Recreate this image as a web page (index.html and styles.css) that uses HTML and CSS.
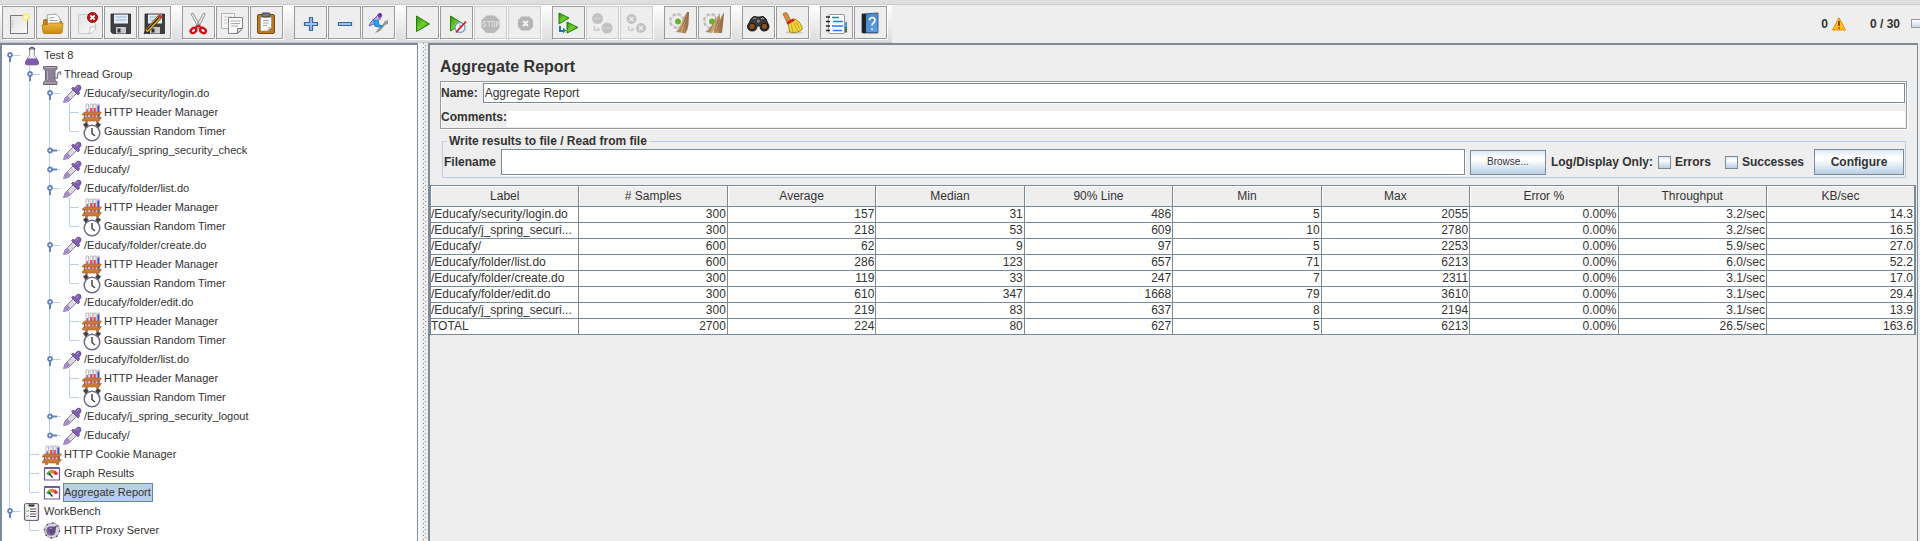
FILE: index.html
```html
<!DOCTYPE html>
<html lang="en">
<head>
<meta charset="utf-8">
<title>Aggregate Report</title>
<link rel="stylesheet" href="styles.css">
</head>
<body>
<svg class="defs" width="0" height="0" aria-hidden="true">
  <defs>
    <linearGradient id="green" x1="0" y1="0" x2="1" y2="1"><stop offset="0" stop-color="#2f8a10"/><stop offset=".5" stop-color="#6fd02c"/><stop offset="1" stop-color="#2a7d0c"/></linearGradient>
    <linearGradient id="gold" x1="0" y1="0" x2="0" y2="1"><stop offset="0" stop-color="#f0b840"/><stop offset="1" stop-color="#c88a10"/></linearGradient>
    <linearGradient id="blue" x1="0" y1="0" x2="1" y2="1"><stop offset="0" stop-color="#3f7fc4"/><stop offset="1" stop-color="#5f9fe4"/></linearGradient>
    <linearGradient id="paper" x1="0" y1="0" x2="1" y2="1"><stop offset="0" stop-color="#e2e2e2"/><stop offset="1" stop-color="#fafafa"/></linearGradient>
    <linearGradient id="straw" x1="0" y1="0" x2="1" y2="0"><stop offset="0" stop-color="#b08a60"/><stop offset=".5" stop-color="#cfa478"/><stop offset="1" stop-color="#8a6238"/></linearGradient>

    <symbol id="open" viewBox="0 0 20 12"><path d="M7.500 5.500h11" stroke="#b8cfe5" fill="none"/><path d="M8 6v6" stroke="#6382bf" stroke-width="2"/><circle cx="8" cy="5" r="2" fill="#fff" stroke="#6382bf" stroke-width="1.800"/></symbol>
    <symbol id="shut" viewBox="0 0 20 12"><path d="M7.500 5.500h11" stroke="#b8cfe5" fill="none"/><path d="M9 5.500h6" stroke="#6382bf" stroke-width="2"/><circle cx="8" cy="5.500" r="2" fill="#fff" stroke="#6382bf" stroke-width="1.800"/></symbol>
    <symbol id="leaf" viewBox="0 0 20 12"><path d="M7.500 5.500h9.500" stroke="#b8cfe5" fill="none"/></symbol>

    <symbol id="flask" viewBox="0 0 20 20"><path d="M7.500 3v6L3.500 16q-1 3 2 3h9q3 0 2-3L12.500 9V3z" fill="#f1eef6" stroke="#999" stroke-width="1"/><path d="M5 12.500h10l2 4q0 2.500-2.500 2.500h-9Q3 19 3 16.500z" fill="#7e5cae"/><path d="M7 3.500q3-4 6 0" fill="none" stroke="#555" stroke-width="1.300"/><path d="M9 5v5" stroke="#fff"/></symbol>
    <symbol id="spool" viewBox="0 0 20 20"><path d="M1.500 1.500h13.500V4l-2 1.500v10l2 1.500v2.500H1.500V17l2-1.500v-10l-2-1.500z" fill="#8c8294" stroke="#6d6378"/><path d="M5.500 6v9" stroke="#b4acbc"/><path d="M2 2.500h12.500M2 18h12.500" stroke="#b4acbc"/><path d="M13 13q3 1 2.500-2.500T18.500 7v3" fill="none" stroke="#8c8294" stroke-width="1.500"/></symbol>
    <symbol id="dropper" viewBox="0 0 20 20"><path d="M1.500 18.500l1.500-4.500 8-8 3.500 3.500-8 8z" fill="#dcd8e2" stroke="#8a829a"/><path d="M1.500 18.500l1.500-4.500 2.500-2.500 3 3.500-3 2.500z" fill="#a58cc8"/><path d="M9.500 4.500l6.500 6.500 1.500-2-.5-1.500 2-3Q19.500 1 16 1l-3.500 3-1.500-.8z" fill="#7e5cae" stroke="#6a4898" stroke-width=".8"/><path d="M14.500 4.500l2-2" stroke="#b8a0dc"/></symbol>
    <symbol id="rack" viewBox="0 0 20 20"><g stroke="#aaa" fill="#f4f4fa" stroke-width=".7"><path d="M4 1h2.500v13H4zM8 1h2.500v13H8zM11.500 1H14v13h-2.500zM15 1h2.500v13H15z"/></g><path d="M4.500 6H6v8H4.500z" fill="#9470b8"/><path d="M8.200 5h2v9h-2zM11.700 5h2v9h-2z" fill="#e0405c"/><path d="M15.400 2.500h1.800V14h-1.800z" fill="#4048d8"/><path d="M.5 11l2-2H19.500l-2 3H.5zM.5 16.500l2-2H19.500L17 18H.5z" fill="#cc7a38" stroke="#a8602a" stroke-width=".6"/><path d="M2.500 11v5M17 11v5M3 19h3M14 19h3" stroke="#a8602a" stroke-width="1.400"/></symbol>
    <symbol id="timer" viewBox="0 0 20 20"><path d="M1.500 3l3.500-1.500M15 1.500L18.500 3M3 5.500l3-3.500M17 5.500L14 2" stroke="#444" stroke-width="2"/><circle cx="10" cy="11" r="7.800" fill="#fff" stroke="#75688a" stroke-width="1.500"/><path d="M10 6v5.500l3 2.500" fill="none" stroke="#444" stroke-width="1.500"/></symbol>
    <symbol id="gauge" viewBox="0 0 20 20"><path d="M2.500 4h15v12h-15z" fill="#fff" stroke="#7058a0" stroke-width="1.200"/><path d="M2.500 4h15" stroke="#5b4b90" stroke-width="1.600"/><path d="M4.500 10.500q0-2 2.500-4l2 3-2 2z" fill="#48b048"/><path d="M7 6.500q3-1.500 6 0l-1.500 3H9z" fill="#ee8030"/><path d="M13 6.500q3 1.500 3 4l-3 .5-1.500-2z" fill="#e03030"/><path d="M10.500 13.500l-3.500-4" stroke="#222" stroke-width="1.200"/></symbol>
    <symbol id="bench" viewBox="0 0 20 20"><rect x="2.500" y="1.500" width="14" height="17" rx="2" fill="#e6e4ea" stroke="#6e6478" stroke-width="1.200"/><path d="M5 4h9v13H5z" fill="#fafafa"/><path d="M6.500 3.500h6" stroke="#333" stroke-width="2.200"/><path d="M8 7h6M8 9.500h6M8 12h6M8 14.500h6" stroke="#555" stroke-width="1.200"/><path d="M4.500 9l1 1 1-2M4.500 14l1 1 1-2" fill="none" stroke="#58b040"/></symbol>
    <symbol id="proxy" viewBox="0 0 20 20"><circle cx="10" cy="9.500" r="7.500" fill="#d8d2e0" stroke="#8a8098" stroke-width=".7"/><circle cx="10" cy="9.500" r="7.500" fill="none" stroke="#333" stroke-width="1.300" stroke-dasharray="1.300 4.600"/><circle cx="9" cy="10" r="4.800" fill="#7a6898"/><path d="M6 9.500q0-4 4-3l5-2-2 5q0 4-4 4z" fill="#5d4a80"/><path d="M7 8.500q1-2 3-1" stroke="#b8a8d0" fill="none"/></symbol>

    <symbol id="new" viewBox="0 0 24 24"><path d="M4.500 4.500h17v18h-17z" fill="url(#paper)" stroke="#777"/><path d="M6 10h1M6 13h1M6 16h1" stroke="#999"/><circle cx="20" cy="6" r="4" fill="#f5ea70" opacity=".8"/><circle cx="20" cy="6" r="2" fill="#fffde0"/></symbol>
    <symbol id="folder" viewBox="0 0 24 24"><path d="M3 10q0-2 2-2h5l1 2h11v9H3z" fill="#b87c10"/><path d="M7 4l9-1 4 4v9H8z" fill="#fff" stroke="#888" stroke-width=".8"/><path d="M9.500 7l5-.5M9.500 9.500h8" stroke="#999"/><path d="M2 14q6 0 8-2h13l-1 9q0 1.500-1.500 1.500H4.500Q3 22.500 3 21z" fill="url(#gold)" stroke="#a87410" stroke-width=".8"/></symbol>
    <symbol id="close" viewBox="0 0 24 24"><path d="M4.500 3.500h17v12l-6 7h-11z" fill="url(#paper)" stroke="#ccc"/><path d="M15 23q2-5 1-7 4 1 6-1 0 5-7 8z" fill="#fff" stroke="#aaa" stroke-width=".7"/><circle cx="18.500" cy="6.500" r="5" fill="#c81010" stroke="#901010"/><path d="M16.300 4.300l4.400 4.400m0-4.400l-4.400 4.400" stroke="#fff" stroke-width="1.900"/></symbol>
    <symbol id="save" viewBox="0 0 24 24"><path d="M3 3h19.500v19.500H5L3 21z" fill="#3f4044" stroke="#222" stroke-width=".8"/><path d="M6 3.500h14v9H6z" fill="#e4ecf4"/><path d="M7.500 6h11M7.500 9h11" stroke="#90b4d8"/><path d="M8 16h10v6.500H8z" fill="#c8c8c8"/><path d="M9.500 17.500h3v4h-3z" fill="#333"/></symbol>
    <symbol id="saveas" viewBox="0 0 24 24"><use href="#save" width="24" height="24"/><path d="M2 23l2-5L16 5l3 2.500L7 20.500z" fill="#f0b820" stroke="#4c3806" stroke-width=".8"/><path d="M5 19L17.500 6" stroke="#222" stroke-width="1.200"/><path d="M15.500 5l2-2q2.500 1 3 3L19 8z" fill="#d04030"/><path d="M2 23l1.300-3.500 2.500 2z" fill="#222"/></symbol>
    <symbol id="cut" viewBox="0 0 24 24"><path d="M5 3l2-1 8 14-2 2zM19.500 3l-2-1-8 14 2 2z" fill="#e8e8e8" stroke="#8b8b8b" stroke-width=".9"/><ellipse cx="7.500" cy="19.500" rx="3" ry="2.300" transform="rotate(-35 7.500 19.500)" fill="none" stroke="#d01018" stroke-width="2.400"/><ellipse cx="17" cy="19.500" rx="3" ry="2.300" transform="rotate(35 17 19.500)" fill="none" stroke="#d01018" stroke-width="2.400"/><path d="M9 17l3.300-2.500L15.500 17" fill="none" stroke="#d01018" stroke-width="2"/></symbol>
    <symbol id="copy" viewBox="0 0 24 24"><path d="M1.500 2.500h13v15h-13z" fill="#f6f6f6" stroke="#b0b0b0"/><path d="M4 6h8M4 9h3M4 12h3" stroke="#ccc"/><path d="M8.500 6.500h14v11l-5 5h-9z" fill="#fafafa" stroke="#888"/><path d="M17.500 22.500v-5h5z" fill="#ddd" stroke="#777"/><path d="M11 10h9M11 12.500h9M11 15h7" stroke="#aaa"/></symbol>
    <symbol id="paste" viewBox="0 0 24 24"><rect x="3.500" y="3.500" width="17" height="19" rx="1.500" fill="#b87a20" stroke="#7c4e0c"/><path d="M6.500 6h11v10l-4 4h-7z" fill="#fcfcfc" stroke="#888" stroke-width=".7"/><path d="M13.500 20l.5-4h4z" fill="#ccc"/><rect x="8" y="2" width="8" height="4" rx="1" fill="#77787a" stroke="#444"/><path d="M9 9.500h6M9 12h6M9 14.500h4" stroke="#aaa"/></symbol>
    <symbol id="plus" viewBox="0 0 24 24"><path d="M11.500 6.500h3v5h5v3h-5v5h-3v-5h-5v-3h5z" fill="#9fc3ea" stroke="#3465a4" stroke-width="1.200"/></symbol>
    <symbol id="minus" viewBox="0 0 24 24"><path d="M6.500 11.500h13v3h-13z" fill="#9fc3ea" stroke="#3465a4" stroke-width="1.200"/></symbol>
    <symbol id="toggle" viewBox="0 0 24 24"><path d="M9 22l3-4 5-5 2-3 3-1v4l-3 1-4 5-3 2z" fill="#999"/><path d="M3 15l2-4 7-7 2-2 2 2-2 4-6 5z" fill="#b8a4d8" stroke="#8060b0"/><path d="M11.500 4q1-3 4-1.500Q16 6 13 7z" fill="#7030b0"/><path d="M7 9l5 1 1 4 3 1-2 1-5-1-1-4z" fill="#2ba0f4" stroke="#1a8be0" stroke-width="1.200"/></symbol>
    <symbol id="play" viewBox="0 0 24 24"><path d="M6.500 5v15.500l13-7.500z" fill="url(#green)" stroke="#267a08"/></symbol>
    <symbol id="playnow" viewBox="0 0 24 24"><path d="M6.500 5v15l12-7.500z" fill="url(#green)" stroke="#267a08"/><circle cx="16" cy="16.500" r="5" fill="#eef4fc" stroke="#7aa0c8" stroke-width="1.400"/><path d="M16 13.500V17l-2 1" fill="none" stroke="#5f86b0"/><path d="M12 21.500L22 10.500" stroke="#d81818" stroke-width="1.700"/></symbol>
    <symbol id="stop" viewBox="0 0 24 24"><path d="M8.500 4.500h8L21.500 9v8l-5 5h-8l-5-5V9z" fill="#b8b8b8"/><path d="M8 10.500H5.500V13h2v2.500H5M9 10.500h4M11 10.500v5M14 10.500h2.500v5H14zM18.500 16v-5.500h2V13h-2" fill="none" stroke="#ddd"/></symbol>
    <symbol id="halt" viewBox="0 0 24 24"><path d="M9.500 5.500h8L21 9v7l-3.500 3.500h-8L6 16V9z" fill="#b5b5b5"/><path d="M11 10l5 5m0-5l-5 5" stroke="#f4f4f4" stroke-width="2"/></symbol>
    <symbol id="rstart" viewBox="0 0 24 24"><path d="M3 2v11l10-6z" fill="url(#green)" stroke="#267a08"/><path d="M11 11v11l11-5.500z" fill="url(#green)" stroke="#267a08"/><path d="M4 15v5h4" fill="none" stroke="#207888" stroke-width="2"/><path d="M7 16.500v6l3-3z" fill="#207888"/></symbol>
    <symbol id="rstop" viewBox="0 0 24 24"><circle cx="7.500" cy="7.500" r="5.500" fill="#c2c2c2"/><circle cx="17" cy="17" r="5.500" fill="#c2c2c2"/><path d="M4 7.500h7M13.500 17h7" stroke="#d8d8d8" stroke-width="1.500" stroke-dasharray="1.500 .7"/><path d="M4.500 15v4H8" fill="none" stroke="#ccc" stroke-width="1.500"/><path d="M7.500 16v5l3-2.500z" fill="#ccc"/></symbol>
    <symbol id="rhalt" viewBox="0 0 24 24"><circle cx="7.500" cy="8" r="5" fill="#c2c2c2"/><circle cx="17" cy="17" r="5" fill="#c2c2c2"/><path d="M5.500 6l4 4m0-4l-4 4M15 15l4 4m0-4l-4 4" stroke="#efefef" stroke-width="1.400"/><path d="M4.500 15v4H8" fill="none" stroke="#ccc" stroke-width="1.500"/><path d="M7.500 16v5l3-2.500z" fill="#ccc"/></symbol>
    <symbol id="gear" viewBox="0 0 24 24"><circle cx="9" cy="10" r="6.500" fill="none" stroke="#bbb" stroke-width="3" stroke-dasharray="3.100 2"/><circle cx="9" cy="10" r="6" fill="#eee" stroke="#c4c4c4" stroke-width=".8"/><circle cx="10" cy="10.500" r="3" fill="#62b82c"/></symbol>
    <symbol id="clear" viewBox="0 0 24 24"><use href="#gear" width="24" height="24"/><path d="M19 1h2l-.5 12q-.5 6-3 9.500L8 21q5-6 7-13z" fill="url(#straw)"/><path d="M18.500 6l-7 15M18.500 9l-4 13M19 11l-2 11" stroke="#8e6a44" stroke-width=".7" fill="none"/></symbol>
    <symbol id="clearall" viewBox="0 0 24 24"><use href="#gear" width="24" height="24"/><path d="M14 3l-2 8q-3 6-9 10l7 1 2-3 0 3h8l1-9 1-12-4 8-.5-7-3.500 8z" fill="url(#straw)"/><path d="M13 9L7 21M16 9l-4 13M20 7l-3 15M18 12l-4 9" stroke="#8e6a44" stroke-width=".7" fill="none"/></symbol>
    <symbol id="find" viewBox="0 0 24 24"><path d="M5 8q2-4 6-2h3q4-2 6 2l3 7q0 5-5 5-4 0-4-5h-3q0 5-4.500 5Q1.500 20 1.500 15z" fill="#3a3a3c" stroke="#1c1c1e"/><circle cx="6" cy="15.500" r="3.300" fill="#8a5020" stroke="#151515"/><circle cx="18.500" cy="15.500" r="3.300" fill="#8a5020" stroke="#151515"/><path d="M7 8q1-1.500 3-.5M15 8q1-1.500 3-.5" stroke="#aaa" fill="none"/><circle cx="12.300" cy="10" r="1.500" fill="#888"/></symbol>
    <symbol id="broom" viewBox="0 0 24 24"><ellipse cx="14" cy="21.500" rx="9" ry="1.500" fill="#ccc"/><path d="M3 3q2-2 4-1l4 8-3.500 2z" fill="#d89040" stroke="#a06018" stroke-width=".8"/><path d="M8 12l7-4q6 3 7.500 10-5 5-13 3Q9 17 8 12z" fill="#f2d440" stroke="#a88a10"/><path d="M11 13l2 8M14 12l3.500 8M16 11l4 7" stroke="#b89818" stroke-width=".8"/><path d="M7 12.500l7-4" stroke="#d02020" stroke-width="2.600"/></symbol>
    <symbol id="list" viewBox="0 0 24 24"><path d="M19 11h4v5h-4z" fill="#38a0f0"/><path d="M19 16h4v5.500h-4z" fill="#1f8a2c"/><rect x="4.500" y="3.500" width="16" height="19" rx="1.500" fill="#fff" stroke="#999"/><path d="M2 6h4M2 10.500h4M2 15h4M2 19.500h4" stroke="#222" stroke-width="1.600"/><path d="M8 6.500h7M9 10.500h10M8 15h11M9 19.500h9" stroke="#2080f0" stroke-width="1.400"/></symbol>
    <symbol id="help" viewBox="0 0 24 24"><path d="M4 3l16-1v19.500H4z" fill="url(#blue)" stroke="#3a5f8c"/><path d="M4 3h4v19H4z" fill="#222"/><path d="M4.500 22.500H20" stroke="#aaa"/><path d="M11.500 9.500q0-3 2.700-3t2.700 2.800q0 1.700-1.500 2.700t-1.300 2.700M14 17.500v1.600" fill="none" stroke="#fff" stroke-width="1.700"/></symbol>
    <symbol id="warn" viewBox="0 0 14 14"><path d="M7 .8L13.500 13H.5z" fill="#ffc21c" stroke="#e8860c" stroke-linejoin="round"/><path d="M7 4v5M7 10.300v1.500" stroke="#8a2a08" stroke-width="1.600"/></symbol>
  </defs>
</svg>

<header class="topbar">
  <div class="toolbar" role="toolbar" aria-label="Main">
    <div class="group">
      <button class="tool" aria-label="New"><svg><use href="#new"/></svg></button>
      <button class="tool" aria-label="Open"><svg><use href="#folder"/></svg></button>
      <button class="tool" aria-label="Close"><svg><use href="#close"/></svg></button>
      <button class="tool" aria-label="Save"><svg><use href="#save"/></svg></button>
      <button class="tool" aria-label="Save as"><svg><use href="#saveas"/></svg></button>
    </div>
    <div class="group">
      <button class="tool" aria-label="Cut"><svg><use href="#cut"/></svg></button>
      <button class="tool" aria-label="Copy"><svg><use href="#copy"/></svg></button>
      <button class="tool" aria-label="Paste"><svg><use href="#paste"/></svg></button>
    </div>
    <div class="group">
      <button class="tool" aria-label="Expand all"><svg><use href="#plus"/></svg></button>
      <button class="tool" aria-label="Collapse all"><svg><use href="#minus"/></svg></button>
      <button class="tool" aria-label="Toggle"><svg><use href="#toggle"/></svg></button>
    </div>
    <div class="group">
      <button class="tool" aria-label="Start"><svg><use href="#play"/></svg></button>
      <button class="tool" aria-label="Start no pauses"><svg><use href="#playnow"/></svg></button>
      <button class="tool" aria-label="Stop" disabled><svg><use href="#stop"/></svg></button>
      <button class="tool" aria-label="Shutdown" disabled><svg><use href="#halt"/></svg></button>
    </div>
    <div class="group">
      <button class="tool" aria-label="Remote start all"><svg><use href="#rstart"/></svg></button>
      <button class="tool" aria-label="Remote stop all" disabled><svg><use href="#rstop"/></svg></button>
      <button class="tool" aria-label="Remote shutdown all" disabled><svg><use href="#rhalt"/></svg></button>
    </div>
    <div class="group">
      <button class="tool" aria-label="Clear"><svg><use href="#clear"/></svg></button>
      <button class="tool" aria-label="Clear all"><svg><use href="#clearall"/></svg></button>
    </div>
    <div class="group">
      <button class="tool" aria-label="Search"><svg><use href="#find"/></svg></button>
      <button class="tool" aria-label="Reset search"><svg><use href="#broom"/></svg></button>
    </div>
    <div class="group">
      <button class="tool" aria-label="Function helper"><svg><use href="#list"/></svg></button>
      <button class="tool" aria-label="Help"><svg><use href="#help"/></svg></button>
    </div>
  </div>
  <div class="status">
    <span class="errors">0 <svg><use href="#warn"/></svg></span>
    <span class="threads">0 / 30</span>
    <span class="lamp"></span>
  </div>
</header>

<div class="workspace">
  <nav class="sidebar" aria-label="Test plan">
    <ul class="tree">
      <li><div class="node"><svg class="knob"><use href="#open"/></svg><svg class="icon"><use href="#flask"/></svg><span class="text">Test 8</span></div>
        <ul>
          <li><div class="node"><svg class="knob"><use href="#open"/></svg><svg class="icon"><use href="#spool"/></svg><span class="text">Thread Group</span></div>
            <ul>
              <li><div class="node"><svg class="knob"><use href="#open"/></svg><svg class="icon"><use href="#dropper"/></svg><span class="text">/Educafy/security/login.do</span></div>
                <ul>
                  <li><div class="node"><svg class="knob"><use href="#leaf"/></svg><svg class="icon"><use href="#rack"/></svg><span class="text">HTTP Header Manager</span></div></li>
                  <li><div class="node"><svg class="knob"><use href="#leaf"/></svg><svg class="icon"><use href="#timer"/></svg><span class="text">Gaussian Random Timer</span></div></li>
                </ul></li>
              <li><div class="node"><svg class="knob"><use href="#shut"/></svg><svg class="icon"><use href="#dropper"/></svg><span class="text">/Educafy/j_spring_security_check</span></div></li>
              <li><div class="node"><svg class="knob"><use href="#shut"/></svg><svg class="icon"><use href="#dropper"/></svg><span class="text">/Educafy/</span></div></li>
              <li><div class="node"><svg class="knob"><use href="#open"/></svg><svg class="icon"><use href="#dropper"/></svg><span class="text">/Educafy/folder/list.do</span></div>
                <ul>
                  <li><div class="node"><svg class="knob"><use href="#leaf"/></svg><svg class="icon"><use href="#rack"/></svg><span class="text">HTTP Header Manager</span></div></li>
                  <li><div class="node"><svg class="knob"><use href="#leaf"/></svg><svg class="icon"><use href="#timer"/></svg><span class="text">Gaussian Random Timer</span></div></li>
                </ul></li>
              <li><div class="node"><svg class="knob"><use href="#open"/></svg><svg class="icon"><use href="#dropper"/></svg><span class="text">/Educafy/folder/create.do</span></div>
                <ul>
                  <li><div class="node"><svg class="knob"><use href="#leaf"/></svg><svg class="icon"><use href="#rack"/></svg><span class="text">HTTP Header Manager</span></div></li>
                  <li><div class="node"><svg class="knob"><use href="#leaf"/></svg><svg class="icon"><use href="#timer"/></svg><span class="text">Gaussian Random Timer</span></div></li>
                </ul></li>
              <li><div class="node"><svg class="knob"><use href="#open"/></svg><svg class="icon"><use href="#dropper"/></svg><span class="text">/Educafy/folder/edit.do</span></div>
                <ul>
                  <li><div class="node"><svg class="knob"><use href="#leaf"/></svg><svg class="icon"><use href="#rack"/></svg><span class="text">HTTP Header Manager</span></div></li>
                  <li><div class="node"><svg class="knob"><use href="#leaf"/></svg><svg class="icon"><use href="#timer"/></svg><span class="text">Gaussian Random Timer</span></div></li>
                </ul></li>
              <li><div class="node"><svg class="knob"><use href="#open"/></svg><svg class="icon"><use href="#dropper"/></svg><span class="text">/Educafy/folder/list.do</span></div>
                <ul>
                  <li><div class="node"><svg class="knob"><use href="#leaf"/></svg><svg class="icon"><use href="#rack"/></svg><span class="text">HTTP Header Manager</span></div></li>
                  <li><div class="node"><svg class="knob"><use href="#leaf"/></svg><svg class="icon"><use href="#timer"/></svg><span class="text">Gaussian Random Timer</span></div></li>
                </ul></li>
              <li><div class="node"><svg class="knob"><use href="#shut"/></svg><svg class="icon"><use href="#dropper"/></svg><span class="text">/Educafy/j_spring_security_logout</span></div></li>
              <li><div class="node"><svg class="knob"><use href="#shut"/></svg><svg class="icon"><use href="#dropper"/></svg><span class="text">/Educafy/</span></div></li>
            </ul></li>
          <li><div class="node"><svg class="knob"><use href="#leaf"/></svg><svg class="icon"><use href="#rack"/></svg><span class="text">HTTP Cookie Manager</span></div></li>
          <li><div class="node"><svg class="knob"><use href="#leaf"/></svg><svg class="icon"><use href="#gauge"/></svg><span class="text">Graph Results</span></div></li>
          <li><div class="node"><svg class="knob"><use href="#leaf"/></svg><svg class="icon"><use href="#gauge"/></svg><span class="text selected">Aggregate Report</span></div></li>
        </ul></li>
      <li><div class="node"><svg class="knob"><use href="#open"/></svg><svg class="icon"><use href="#bench"/></svg><span class="text">WorkBench</span></div>
        <ul>
          <li><div class="node"><svg class="knob"><use href="#leaf"/></svg><svg class="icon"><use href="#proxy"/></svg><span class="text">HTTP Proxy Server</span></div></li>
        </ul></li>
    </ul>
  </nav>
  <div class="divider"></div>
  <main class="report">
    <div class="form">
      <h1>Aggregate Report</h1>
      <div class="identity">
        <div class="line"><label for="name">Name:</label><input class="field" id="name" type="text" value="Aggregate Report"></div>
        <div class="line comments"><label for="comments">Comments:</label><input class="plain" id="comments" type="text"></div>
      </div>
      <fieldset class="results">
        <legend>Write results to file / Read from file</legend>
        <div class="filebar">
          <label for="filename">Filename</label>
          <input class="field filename" id="filename" type="text">
          <button class="metal browse">Browse...</button>
          <span class="only">Log/Display Only:</span>
          <label class="check"><input type="checkbox">Errors</label>
          <label class="check"><input type="checkbox">Successes</label>
          <button class="metal configure">Configure</button>
        </div>
      </fieldset>
    </div>
    <table>
      <thead><tr><th>Label</th><th># Samples</th><th>Average</th><th>Median</th><th>90% Line</th><th>Min</th><th>Max</th><th>Error %</th><th>Throughput</th><th>KB/sec</th></tr></thead>
      <tbody>
        <tr><td>/Educafy/security/login.do</td><td>300</td><td>157</td><td>31</td><td>486</td><td>5</td><td>2055</td><td>0.00%</td><td>3.2/sec</td><td>14.3</td></tr>
        <tr><td>/Educafy/j_spring_securi...</td><td>300</td><td>218</td><td>53</td><td>609</td><td>10</td><td>2780</td><td>0.00%</td><td>3.2/sec</td><td>16.5</td></tr>
        <tr><td>/Educafy/</td><td>600</td><td>62</td><td>9</td><td>97</td><td>5</td><td>2253</td><td>0.00%</td><td>5.9/sec</td><td>27.0</td></tr>
        <tr><td>/Educafy/folder/list.do</td><td>600</td><td>286</td><td>123</td><td>657</td><td>71</td><td>6213</td><td>0.00%</td><td>6.0/sec</td><td>52.2</td></tr>
        <tr><td>/Educafy/folder/create.do</td><td>300</td><td>119</td><td>33</td><td>247</td><td>7</td><td>2311</td><td>0.00%</td><td>3.1/sec</td><td>17.0</td></tr>
        <tr><td>/Educafy/folder/edit.do</td><td>300</td><td>610</td><td>347</td><td>1668</td><td>79</td><td>3610</td><td>0.00%</td><td>3.1/sec</td><td>29.4</td></tr>
        <tr><td>/Educafy/j_spring_securi...</td><td>300</td><td>219</td><td>83</td><td>637</td><td>8</td><td>2194</td><td>0.00%</td><td>3.1/sec</td><td>13.9</td></tr>
        <tr><td>TOTAL</td><td>2700</td><td>224</td><td>80</td><td>627</td><td>5</td><td>6213</td><td>0.00%</td><td>26.5/sec</td><td>163.6</td></tr>
      </tbody>
    </table>
  </main>
</div>
</body>
</html>
```
FILE: styles.css
```css
* { box-sizing: border-box; }

body {
  margin: 0;
  min-height: 100vh;
  display: flex;
  flex-direction: column;
  background: #eee;
  color: #333;
  font: 12px/16px "Liberation Sans", Arial, sans-serif;
}

.defs { position: absolute; }

button, input { font: inherit; color: inherit; }

/* Top bar */
.topbar {
  display: flex;
  justify-content: space-between;
  height: 43px;
  border-top: 4px solid #dedede;
  box-shadow: inset 0 1px #ccc;
}

.toolbar {
  display: flex;
  gap: 11px;
  margin-top: 1px;
  padding: 1px 5px 0 2px;
  background: linear-gradient(#fff, #dcdcdc);
  border-bottom: 1px solid #c8c8c8;
}

.group { display: flex; gap: 1px; }

.tool {
  width: 33px;
  height: 33px;
  padding: 3px;
  background: #eee;
  border: 1px solid #999;
  box-shadow: 1px 1px #fff;
}

.tool:disabled { border-color: #ccc; }
.tool svg { display: block; width: 24px; height: 24px; }

.status {
  display: flex;
  align-items: center;
  font-weight: bold;
}

.errors { display: flex; align-items: center; gap: 4px; }
.errors svg { width: 14px; height: 14px; }
.threads { margin: 0 11px 0 24px; }

.lamp {
  width: 9px;
  height: 9px;
  border: 1px solid #999;
  border-right: 0;
  background: linear-gradient(#fff, #c8d8ea);
}

/* Workspace */
.workspace { flex: 1; display: flex; }

.sidebar {
  width: 418px;
  background: #fff;
  border: solid #7a8a99;
  border-width: 2px 1px 0 2px;
}

.divider {
  width: 10px;
  border-left: 3px solid #f8f8f8;
  background-color: #eee;
  background-image:
    conic-gradient(at 1px 1px, transparent 270deg, #7a8a99 0),
    conic-gradient(at 1px 1px, transparent 270deg, #7a8a99 0);
  background-size: 2px 4px;
  background-position: 2px 0, 4px 2px;
  background-repeat: repeat-y;
}

/* Tree */
.tree, .tree ul { margin: 0; padding: 0; list-style: none; }
.tree { padding-top: 1px; font-size: 11px; }
.tree ul { padding-left: 20px; }

.tree li {
  background: linear-gradient(#b8cfe5, #b8cfe5) 7px 0 / 1px 100% no-repeat;
}

.tree li:last-child { background-size: 1px 9px; }
.tree > li:first-child { background-position: 7px 9px; }

.node { display: flex; align-items: center; height: 19px; }
.knob { width: 20px; height: 12px; }
.icon { width: 20px; height: 20px; }

.text {
  margin-left: 2px;
  padding-right: 1px;
  line-height: 17px;
  border: 1px solid transparent;
  border-left-width: 0;
}

.selected {
  background: #b8cfe5;
  border-color: #6382bf;
  box-shadow: -1px 0 #6382bf;
}

/* Report */
.report {
  flex: 1;
  min-width: 0;
  margin-right: 2px;
  border: solid #7a8a99;
  border-width: 2px 1px 0 2px;
}

.form { padding: 12px 10px 7px; }

h1 { margin: 0; font-size: 16px; line-height: 20px; }

label, legend, .only { font-weight: bold; }

.identity {
  margin-top: 4px;
  padding: 1px 1px 1px 0;
  border: 1px solid #999;
  box-shadow: 1px 1px #fff, inset 1px 1px #fff;
}

.line { display: flex; align-items: center; }
.line label { line-height: 20px; }

.field {
  flex: 1;
  min-width: 0;
  height: 20px;
  margin-left: 5px;
  padding: 1px;
  background: #fff;
  border: 1px solid #7a8a99;
  box-shadow: 1px 1px #fff;
}

.comments { margin-top: 4px; }
.plain { flex: 1; height: 16px; margin-top: 3px; padding: 0; border: 0; background: #fff; }

.results {
  min-width: 0;
  margin: 4px 1px 0 2px;
  padding: 0 1px 2px;
  border: 1px solid #b8cfe5;
}

legend { margin-left: 3px; padding: 0 2px; line-height: 16px; }

.filebar { display: flex; align-items: center; }
.filename { height: 26px; }

.metal {
  border: 1px solid #7a8a99;
  background: linear-gradient(#dde8f3, #fff 30%, #fff 40%, #b8cfe5);
  padding: 0;
}

.browse { width: 76px; height: 25px; margin: 0 5px; font-size: 10px; }
.configure { width: 90px; height: 26px; margin-left: 10px; font-weight: bold; }

.check { display: flex; align-items: center; gap: 4px; margin-left: 5px; }
.check + .check { margin-left: 14px; }

.check input {
  appearance: none;
  width: 13px;
  height: 13px;
  margin: 0;
  border: 1px solid #7a8a99;
  background: linear-gradient(#dde8f3, #fff 30%, #b8cfe5);
}

/* Table */
table {
  width: calc(100% - 1px);
  table-layout: fixed;
  border-collapse: collapse;
  border-right: 2px solid #7a8a99;
}

th, td {
  padding: 0 1px;
  border: 1px solid #7a8a99;
  overflow: hidden;
  white-space: nowrap;
}

th {
  height: 21px;
  font-weight: normal;
  line-height: 20px;
  background: #eee;
  box-shadow: inset 1px 1px #fff;
}

td { height: 16px; line-height: 15px; background: #fff; text-align: right; }
td:first-child { padding-left: 0; text-align: left; }
```
